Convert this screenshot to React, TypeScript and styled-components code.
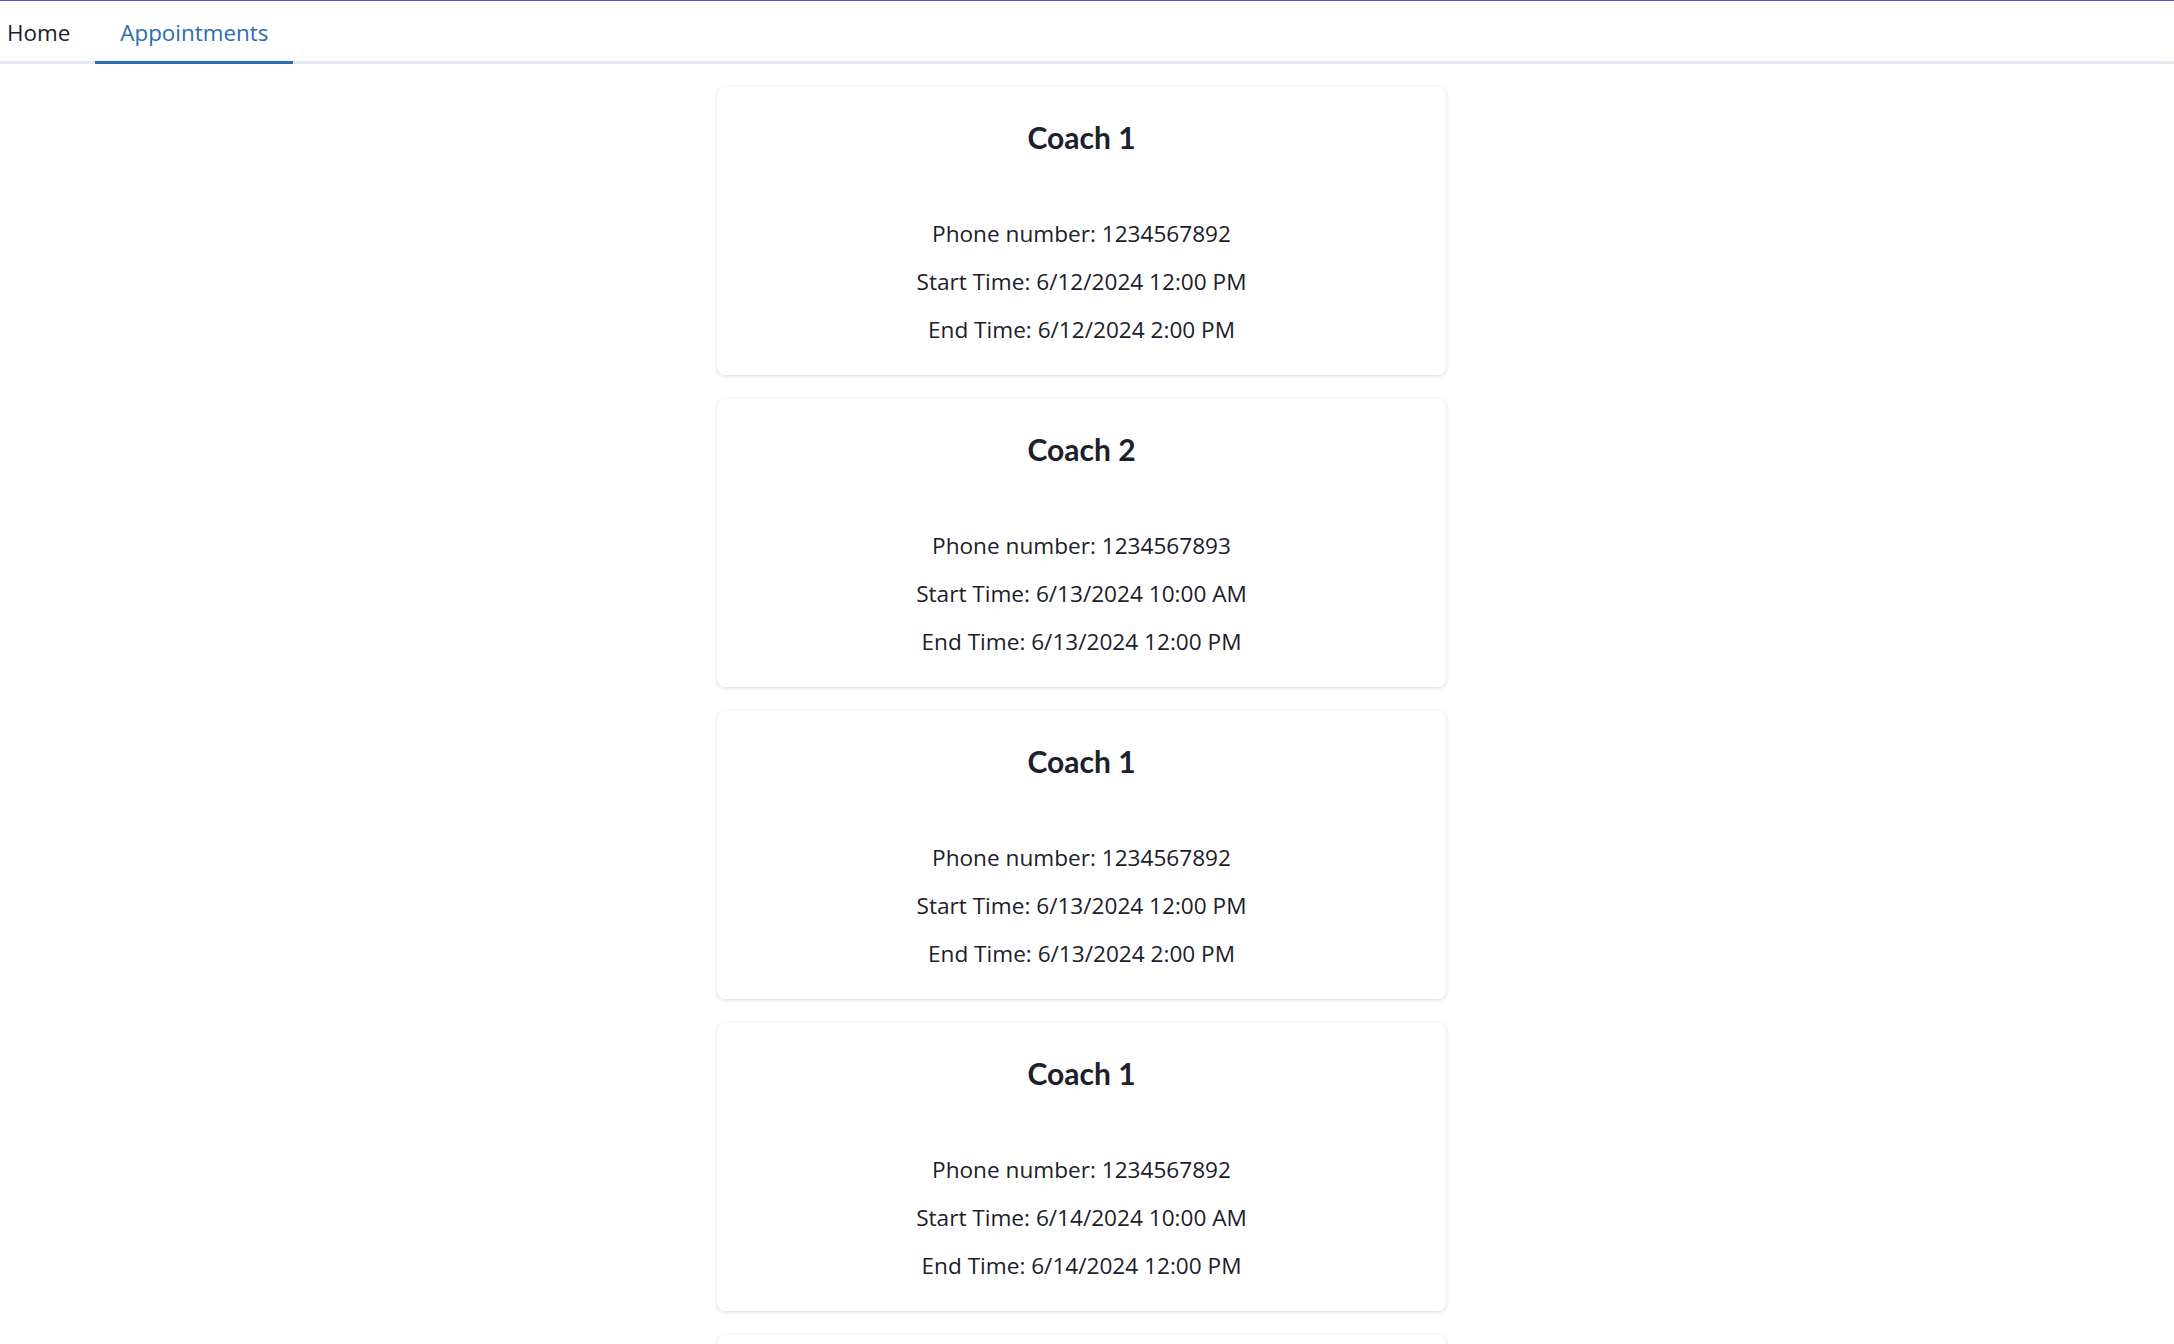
import React from "react";
import styled, { createGlobalStyle } from "styled-components";

const GlobalStyle = createGlobalStyle`
  html, body {
    margin: 0;
    padding: 0;
    background: #ffffff;
  }
  body {
    font-family: "Open Sans", "Noto Sans", sans-serif;
    color: #1a202c;
    border-top: 1px solid #6b4fbb;
  }
  * { box-sizing: border-box; }
`;

const TabList = styled.nav`
  display: flex;
  align-items: flex-end;
  border-bottom: 3px solid #e2e8f0;
`;

const Tab = styled.button<{ $active?: boolean; $first?: boolean }>`
  appearance: none;
  background: none;
  border: none;
  border-bottom: 3px solid ${(p) => (p.$active ? "#2b6cb0" : "transparent")};
  margin-bottom: -3px;
  padding: 15px 25px 12px ${(p) => (p.$first ? "7px" : "25px")};
  font-family: "Open Sans", "Noto Sans", sans-serif;
  font-size: 22.4px;
  line-height: 33px;
  color: ${(p) => (p.$active ? "#2b6cb0" : "#1a202c")};
  cursor: pointer;
`;

const Main = styled.main`
  display: flex;
  flex-direction: column;
  align-items: center;
  gap: 24px;
  padding: 23px 11px 0 0;
`;

const Card = styled.section`
  width: 729px;
  height: 288px;
  flex-shrink: 0;
  background: #ffffff;
  border-radius: 8px;
  box-shadow: 0 1px 4px 0 rgba(0, 0, 0, 0.1), 0 1px 3px 0 rgba(0, 0, 0, 0.06);
  display: flex;
  flex-direction: column;
  align-items: center;
  padding-top: 30px;
`;

const Title = styled.h2`
  margin: 0;
  font-family: Lato, "Open Sans", sans-serif;
  font-weight: 700;
  font-size: 30px;
  line-height: 40px;
  color: #1a202c;
`;

const Details = styled.div`
  margin-top: 60px;
  display: flex;
  flex-direction: column;
  align-items: center;
  gap: 15px;
`;

const Line = styled.p`
  margin: 0;
  font-size: 22.6px;
  line-height: 33px;
  color: #1a202c;
`;

type Appt = { coach: string; phone: string; start: string; end: string };

const appointments: Appt[] = [
  { coach: "Coach 1", phone: "1234567892", start: "6/12/2024 12:00 PM", end: "6/12/2024 2:00 PM" },
  { coach: "Coach 2", phone: "1234567893", start: "6/13/2024 10:00 AM", end: "6/13/2024 12:00 PM" },
  { coach: "Coach 1", phone: "1234567892", start: "6/13/2024 12:00 PM", end: "6/13/2024 2:00 PM" },
  { coach: "Coach 1", phone: "1234567892", start: "6/14/2024 10:00 AM", end: "6/14/2024 12:00 PM" },
  { coach: "Coach 2", phone: "1234567893", start: "6/14/2024 12:00 PM", end: "6/14/2024 2:00 PM" },
];

export default function App() {
  return (
    <>
      <GlobalStyle />
      <TabList>
        <Tab $first>Home</Tab>
        <Tab $active>Appointments</Tab>
      </TabList>
      <Main>
        {appointments.map((a, i) => (
          <Card key={i}>
            <Title>{a.coach}</Title>
            <Details>
              <Line>Phone number: {a.phone}</Line>
              <Line>Start Time: {a.start}</Line>
              <Line>End Time: {a.end}</Line>
            </Details>
          </Card>
        ))}
      </Main>
    </>
  );
}
